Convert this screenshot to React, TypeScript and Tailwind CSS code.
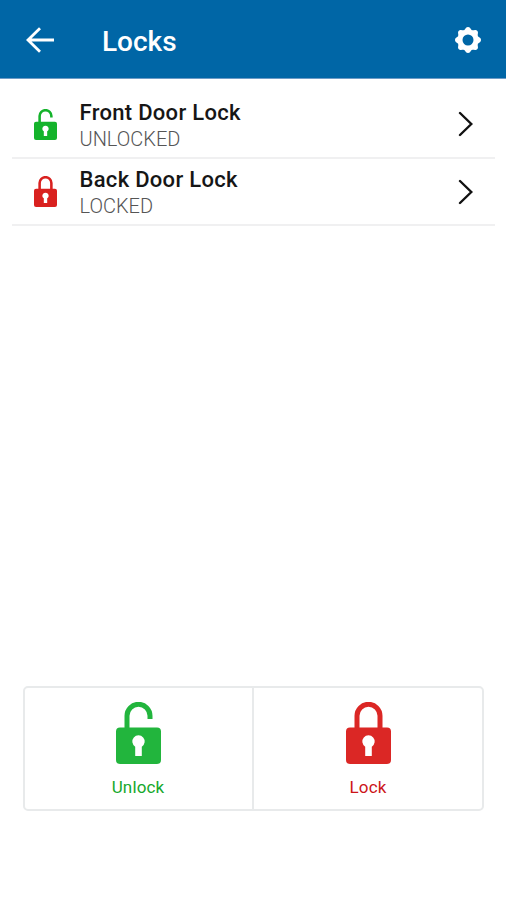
type LockIconProps = { open: boolean; className: string };

function LockIcon({ open, className }: LockIconProps) {
  return (
    <svg viewBox="0 0 45 62" preserveAspectRatio="none" className={className} fill="none">
      <path
        d={open ? 'M11 28V13.8a11.5 11.5 0 0 1 23 0V17' : 'M11 28V13.8a11.5 11.5 0 0 1 23 0V28'}
        stroke="currentColor"
        strokeWidth="5"
      />
      <path
        fillRule="evenodd"
        fill="currentColor"
        d="M4 25.5H41a4 4 0 0 1 4 4V58a4 4 0 0 1-4 4H4a4 4 0 0 1-4-4V29.5a4 4 0 0 1 4-4ZM19.2 44.7V54h6.6V44.7a6.2 6.2 0 1 0-6.6 0Z"
      />
    </svg>
  );
}

function GearIcon() {
  const teeth = [0, 45, 90, 135, 180, 225, 270, 315];
  return (
    <svg viewBox="-13 -13 26 26" className="size-[26px] text-white">
      <circle r="8" fill="none" stroke="currentColor" strokeWidth="5" />
      {teeth.map((angle) => (
        <path key={angle} d="M-4.2-9.2L-1.9-12.2Q-1.3-13 0-13T1.9-12.2L4.2-9.2Z" fill="currentColor" transform={`rotate(${angle})`} />
      ))}
    </svg>
  );
}

function LockRow({ name, open }: { name: string; open: boolean }) {
  return (
    <li className="flex h-[67.5px] items-center border-b-2 border-[#f0f0f1] pl-[22px] pr-[22px]">
      <LockIcon open={open} className={open ? 'mt-px h-[31px] w-[23px] text-[#14b32b]' : 'mt-px h-[31px] w-[23px] text-[#d9211f]'} />
      <div className="ml-[22.5px] flex-1 pt-[4px]">
        <div className="text-[22px] font-medium leading-[26px] tracking-[0.3px] text-[#161616]">{name}</div>
        <div className="text-[20px] font-light leading-[26px] text-[#555]">{open ? 'UNLOCKED' : 'LOCKED'}</div>
      </div>
      <svg viewBox="0 0 15 26" className="mt-px h-[26px] w-[15px]" fill="none" stroke="#111" strokeWidth="2.4" strokeLinecap="round">
        <path d="M2 2 13.3 13 2 24" />
      </svg>
    </li>
  );
}

export default function App() {
  return (
    <div className="flex h-[900px] w-[506px] flex-col bg-white font-['Roboto',sans-serif]">
      <header className="flex h-[79px] items-center border-b border-[#6d9bc6] bg-[#0066a6] pl-[25px] pr-[25px] pt-[2px]">
        <svg viewBox="0 0 29 26" className="h-[26px] w-[29px]" fill="none" stroke="#fff" strokeWidth="2.8">
          <path d="M15 1.2 3 13l12 11.800M3 13h26" />
        </svg>
        <h1 className="ml-[48px] flex-1 pt-[3px] text-[28px] font-medium leading-8 text-white">Locks</h1>
        <GearIcon />
      </header>
      <ul className="ml-3 mr-[11px] mt-3">
        <LockRow name="Front Door Lock" open />
        <LockRow name="Back Door Lock" open={false} />
      </ul>
      <div className="mx-[23px] mb-[89px] mt-auto grid h-[125px] w-[461px] grid-cols-[229px_1fr] rounded-[5px] border-2 border-[#e8eaeb]">
        <button className="flex flex-col items-center border-r-2 border-[#e8eaeb] pr-[1px] pt-[14px] text-[#22b53d]">
          <LockIcon open className="h-[62px] w-[45px]" />
          <span className="mt-[13px] text-[17px] leading-5 tracking-[0.15px] text-[#16a82c]">Unlock</span>
        </button>
        <button className="flex flex-col items-center pt-[14px] text-[#db2725]">
          <LockIcon open={false} className="h-[62px] w-[45px]" />
          <span className="mt-[13px] text-[17px] leading-5 tracking-[0.15px] text-[#cc1518]">Lock</span>
        </button>
      </div>
    </div>
  );
}
